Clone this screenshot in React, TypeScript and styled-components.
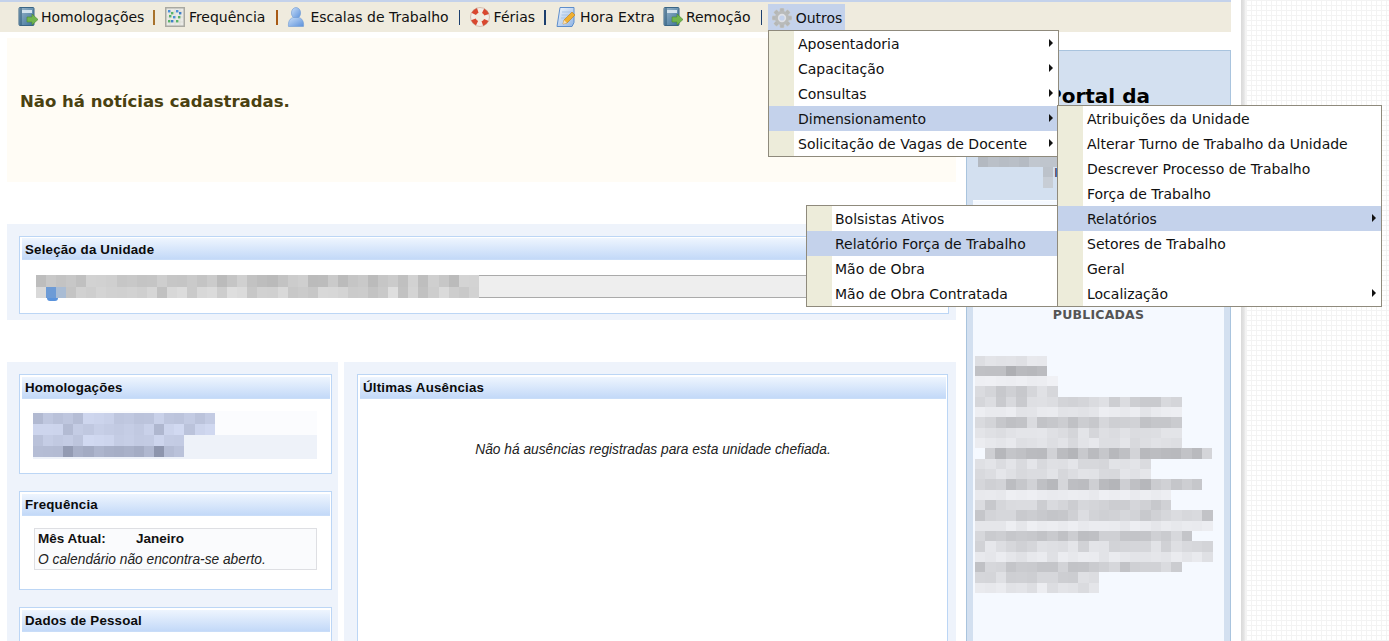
import React from "react";
import styled, { createGlobalStyle } from "styled-components";

const Global = createGlobalStyle`
  html, body { margin: 0; padding: 0; background: #fff; }
  body { font-family: "DejaVu Sans", sans-serif; color: #111; }
`;

const Page = styled.div`
  display: flex;
  width: 1389px;
  height: 641px;
  overflow: hidden;
  position: relative;
`;
const Main = styled.div`
  width: 1231px;
  flex: none;
  display: flex;
  flex-direction: column;
`;
const Edge = styled.div`
  margin-left: 10px;
  width: 5px;
  flex: none;
  background: linear-gradient(90deg, #d9d9d9, #e4e4e4 60%, #f7f7f7);
`;
const Pattern = styled.div`
  flex: 1;
  background-color: #fff;
  background-image:
    repeating-linear-gradient(90deg, #f3f3f3 0 1px, transparent 1px 5px),
    repeating-linear-gradient(0deg, #f3f3f3 0 1px, transparent 1px 5px);
`;
const TopStrip = styled.div`
  height: 2px;
  background: #c4d2eb;
  flex: none;
`;
const MenuBar = styled.nav`
  position: relative;
  height: 30px;
  flex: none;
  background: #efebde;
  display: flex;
  align-items: center;
  padding-left: 18px;
  font-size: 14px;
  color: #111;
`;
const MenuItem = styled.div<{ $gap?: number; $after?: number; $active?: boolean }>`
  display: flex;
  align-items: center;
  gap: ${(p) => p.$gap ?? 3}px;
  margin-right: ${(p) => p.$after ?? 0}px;
  white-space: nowrap;
  ${(p) => p.$active && "background:#c4d2eb; height:28px; margin-top:2px; padding:0 3px 0 4px;"}
`;
const Sep = styled.span<{ $color: string; $left?: number; $right?: number }>`
  width: 1.5px;
  height: 15px;
  background: ${(p) => p.$color};
  margin: 0 ${(p) => p.$right ?? 10}px 0 ${(p) => p.$left ?? 10}px;
  flex: none;
`;
const Icon = styled.svg`
  width: 20px;
  height: 20px;
  flex: none;
  display: block;
`;

const Drop = styled.div<{ $left: number; $top: number; $width: number }>`
  position: absolute;
  left: ${(p) => p.$left}px;
  top: ${(p) => p.$top}px;
  width: ${(p) => p.$width}px;
  background: #fff;
  border: 1px solid #8f8a7c;
  box-sizing: border-box;
  z-index: 5;
  font-size: 14px;
  color: #111;
`;
const DropRow = styled.div<{ $hover?: boolean }>`
  height: 25px;
  display: flex;
  align-items: center;
  position: relative;
  white-space: nowrap;
  background: ${(p) => (p.$hover ? "#c4d2eb" : "transparent")};
`;
const Gutter = styled.span<{ $hover?: boolean; $space: number }>`
  width: 25px;
  height: 25px;
  flex: none;
  margin-right: ${(p) => p.$space}px;
  background: ${(p) => (p.$hover ? "#c4d2eb" : "#edecda")};
`;
const Arrow = styled.span`
  position: absolute;
  right: 5px;
  top: 8px;
  width: 0;
  height: 0;
  border-left: 4px solid #111;
  border-top: 4px solid transparent;
  border-bottom: 4px solid transparent;
`;

const Content = styled.div`
  flex: 1;
  min-height: 0;
  display: flex;
`;
const LeftCol = styled.div`
  width: 949px;
  margin-left: 7px;
  padding-top: 6px;
  flex: none;
  display: flex;
  flex-direction: column;
`;
const News = styled.div`
  height: 144px;
  flex: none;
  background: #fffcf5;
  display: flex;
  align-items: center;
  padding-left: 13px;
  padding-bottom: 18px;
  box-sizing: border-box;
  font-size: 16.55px;
  font-weight: 700;
  color: #4a4110;
`;
const Panel = styled.section`
  background: #eef3fb;
  padding: 12px 7px 6px 12px;
  box-sizing: border-box;
`;
const SelectionPanel = styled(Panel)`
  margin-top: 42px;
  height: 96px;
  flex: none;
`;
const Columns = styled.div`
  margin-top: 42px;
  display: flex;
  gap: 6px;
  flex: 1;
  min-height: 0;
`;
const SidePanel = styled(Panel)`
  width: 331px;
  flex: none;
  display: flex;
  flex-direction: column;
  gap: 17px;
  padding-right: 6px;
`;
const WidePanel = styled(Panel)`
  flex: 1;
  padding: 12px 8px 0 13px;
  display: flex;
`;
const Card = styled.div<{ $h?: number; $top?: number }>`
  background: #fff;
  border: 1px solid #bcd6f5;
  padding: ${(p) => p.$top ?? 2}px 1px 0 2px;
  box-sizing: border-box;
  flex: ${(p) => (p.$h ? "none" : "1")};
  ${(p) => (p.$h ? `height:${p.$h}px;` : "margin-bottom:-10px;")}
`;
const CardTitle = styled.h3<{ $line?: number }>`
  margin: 0;
  height: 22px;
  line-height: ${(p) => p.$line ?? 21}px;
  padding-left: 3px;
  background: linear-gradient(180deg, #eef5fe, #c3d9f8);
  border-bottom: 1px solid #c9ddf8;
  box-sizing: border-box;
  font-family: "Liberation Sans", sans-serif;
  font-size: 13.3px;
  font-weight: 700;
  letter-spacing: 0.2px;
  color: #0b0b0b;
`;
const SelectField = styled.div`
  margin: 15px 8px 0 14px;
  height: 23px;
  background: #eee;
  border-top: 1px solid #aaa;
  border-bottom: 1px solid #aaa;
  box-sizing: border-box;
  position: relative;
`;
const Blob = styled.span`
  position: absolute;
  left: 11px;
  top: 22px;
  width: 11px;
  height: 3px;
  background: #5a93dc;
  border-radius: 0 0 6px 6px;
`;
const MosaicWrap = styled.div<{ $top?: number }>`
  display: flex;
  flex-direction: column;
  margin-top: ${(p) => p.$top ?? 0}px;
`;
const MosaicRow = styled.div<{ $h: number; $x: number }>`
  display: flex;
  height: ${(p) => p.$h}px;
  margin-left: ${(p) => p.$x}px;
`;
const Cell = styled.span<{ $w: number }>`
  width: ${(p) => p.$w}px;
  flex: none;
`;
const StripBox = styled.div`
  margin: 12px 13px 0 11px;
`;
const Strip = styled.div<{ $alt?: boolean }>`
  height: 24px;
  background: ${(p) => (p.$alt ? "#eef2f9" : "#fbfcfe")};
  ${(p) => !p.$alt && "padding-top:2px; box-sizing:border-box;"}
`;
const Calendar = styled.div`
  margin: 12px 13px 0 12px;
  height: 42px;
  box-sizing: border-box;
  border: 1px solid #dedfe3;
  background: #fafbfd;
  font-family: "Liberation Sans", sans-serif;
  font-size: 13.76px;
  padding: 1px 3px 0;
  line-height: 20px;
`;
const CalRow = styled.div`
  display: grid;
  grid-template-columns: 98px auto;
  font-size: 13.5px;
  line-height: 18px;
  height: 20px;
  font-weight: 700;
  color: #111;
`;
const Note = styled.div`
  font-style: italic;
  color: #222;
`;
const Empty = styled.p`
  margin: 43px 0 0;
  text-align: center;
  font-family: "Liberation Sans", sans-serif;
  font-size: 13.76px;
  font-style: italic;
  color: #222;
`;
const RightCol = styled.aside`
  margin: 18px 0 0 10px;
  width: 265px;
  flex: none;
  box-sizing: border-box;
  background: #d3e0f0;
  border: 1px solid #a9c4de;
  border-bottom: none;
  display: flex;
  flex-direction: column;
  position: relative;
`;
const PortalTitle = styled.h2`
  margin: 32px 0 0;
  text-align: center;
  font-size: 20px;
  line-height: 26px;
  font-weight: 700;
  color: #000;
  height: 73px;
`;
const HiddenLine = styled.span<{ $top: number }>`
  position: absolute;
  left: 87px;
  top: ${(p) => p.$top}px;
  font-size: 13px;
  line-height: 12px;
  color: #1a2a5a;
`;
const InnerBox = styled.div`
  margin: 12px 6px 0 6px;
  flex: 1;
  background: #f5f9ff;
  border-top: 1px solid #fbfdff;
  text-align: center;
`;
const Published = styled.h4`
  margin: 106px 0 0;
  font-size: 12.5px;
  line-height: 16px;
  font-weight: 700;
  color: #555;
  letter-spacing: 0.2px;
`;

const hash = (a: number, b: number) => {
  const s = Math.sin(a * 127.1 + b * 311.7) * 43758.5453;
  return s - Math.floor(s);
};
const tone = (base: number, spread: number, tint: [number, number, number], a: number, b: number) => {
  const v = base + (hash(a, b) - 0.5) * spread;
  return `rgb(${Math.round(v + tint[0])},${Math.round(v + tint[1])},${Math.round(v + tint[2])})`;
};

type RowDef = { x: number; n: number; base: number; spread?: number };
const Mosaic: React.FC<{
  rows: RowDef[];
  w: number;
  h: number;
  tint: [number, number, number];
  top?: number;
  over?: Record<string, string>;
}> = ({ rows, w, h, tint, top, over }) => (
  <MosaicWrap $top={top}>
    {rows.map((r, i) => (
      <MosaicRow key={i} $h={h} $x={r.x}>
        {Array.from({ length: r.n }).map((_, j) => (
          <Cell
            key={j}
            $w={w}
            style={{ background: over?.[`${i}:${j}`] ?? tone(r.base, r.spread ?? 26, tint, i + 1, j + 1) }}
          />
        ))}
      </MosaicRow>
    ))}
  </MosaicWrap>
);

const Book: React.FC<{ id: string }> = ({ id }) => (
  <Icon viewBox="0 0 20 20">
    <defs>
      <linearGradient id={id} x1="0" x2="1" y1="0" y2="1">
        <stop offset="0" stopColor="#9db8cb" />
        <stop offset="1" stopColor="#3a7098" />
      </linearGradient>
    </defs>
    <rect x="1" y="0.5" width="15" height="18" rx="1" fill={`url(#${id})`} stroke="#3a6585" />
    <rect x="4" y="3" width="10" height="3" fill="#d3e2ec" />
    <path d="M3 1v17" stroke="#2a5674" strokeWidth="1" />
    <path d="M9 10h5V7l6 5.500-6 5.500v-3H9z" fill="#72b54e" stroke="#4a8a30" strokeWidth="0.6" />
  </Icon>
);
const Dots: React.FC = () => (
  <Icon viewBox="0 0 20 20">
    <rect x="0.75" y="0.75" width="18.5" height="18.5" fill="#eaeae6" stroke="#a9a9a2" strokeWidth="1.500" />
    <path d="M5 2v16M10 2v16M15 2v16M2 5h16M2 10h16M2 15h16" stroke="#d6d6d1" strokeWidth="0.6" />
    {[
      [4, 4, "#4a90d9"], [7, 6, "#58b368"], [12, 4, "#4a90d9"], [15, 6, "#3f7fc8"],
      [5, 9, "#58b368"], [9, 10, "#4a90d9"], [14, 10, "#58b368"], [7, 14, "#3f7fc8"], [12, 14, "#58b368"], [4, 14, "#58b368"],
    ].map(([x, y, c], i) => (
      <rect key={i} x={(x as number) - 1} y={(y as number) - 1} width="2.4" height="2.4" fill={c as string} />
    ))}
  </Icon>
);
const Person: React.FC = () => (
  <Icon viewBox="0 0 20 20">
    <defs>
      <linearGradient id="pg" x1="0" x2="1" y1="0" y2="1">
        <stop offset="0" stopColor="#c8def8" />
        <stop offset="1" stopColor="#5b90da" />
      </linearGradient>
    </defs>
    <ellipse cx="10" cy="6" rx="4.6" ry="5.500" fill="url(#pg)" stroke="#6f9ad4" strokeWidth="0.6" />
    <path d="M2.500 19.500c-.6-5 1.500-8.500 5-9h5c3.500.5 5.600 4 5 9z" fill="url(#pg)" stroke="#6f9ad4" strokeWidth="0.6" />
  </Icon>
);
const Buoy: React.FC = () => (
  <Icon viewBox="0 0 20 20">
    <circle cx="10" cy="10" r="7" fill="none" stroke="#f2ece6" strokeWidth="5" />
    <circle cx="10" cy="10" r="7" fill="none" stroke="#d9472f" strokeWidth="5" strokeDasharray="5.500 5.500" strokeDashoffset="8" />
    <circle cx="10" cy="10" r="9.500" fill="none" stroke="#b9907f" strokeWidth="0.5" />
  </Icon>
);
const NotePad: React.FC = () => (
  <Icon viewBox="0 0 20 20">
    <defs>
      <linearGradient id="ng" x1="0" x2="1" y1="0" y2="1">
        <stop offset="0" stopColor="#f4f8fd" />
        <stop offset="1" stopColor="#8fb4e4" />
      </linearGradient>
    </defs>
    <path d="M4 .5h14v15l-2 4H1z" fill="url(#ng)" stroke="#5e8ecb" />
    <path d="M6 5h9M5.500 8h7M5 11h5" stroke="#a9c4e6" />
    <path d="M7 17l1-4 8-8 3 3-8 8z" fill="#f0b030" stroke="#b97c18" strokeWidth="0.6" />
    <path d="M7 17l1-4 3 3z" fill="#f6e0bc" />
  </Icon>
);
const Gear: React.FC = () => (
  <Icon viewBox="0 0 20 20">
    <g fill="#b5b7b6" stroke="#d2d3d1" strokeWidth="0.5">
      {[0, 45, 90, 135, 180, 225, 270, 315].map((a) => (
        <rect key={a} x="7.800" y="0" width="4.400" height="5" rx="1" transform={`rotate(${a} 10 10)`} />
      ))}
    </g>
    <circle cx="10" cy="10" r="7" fill="#b9bbba" />
    <circle cx="10" cy="10" r="4.200" fill="#dfe1e6" />
    <circle cx="10" cy="10" r="2.600" fill="#c4d2eb" />
  </Icon>
);

const dropA = ["Aposentadoria", "Capacitação", "Consultas", "Dimensionamento", "Solicitação de Vagas de Docente"];
const dropB = [
  "Atribuições da Unidade",
  "Alterar Turno de Trabalho da Unidade",
  "Descrever Processo de Trabalho",
  "Força de Trabalho",
  "Relatórios",
  "Setores de Trabalho",
  "Geral",
  "Localização",
];
const dropC = ["Bolsistas Ativos", "Relatório Força de Trabalho", "Mão de Obra", "Mão de Obra Contratada"];

const DropMenu: React.FC<{
  left: number;
  top: number;
  width: number;
  items: string[];
  hover: string;
  arrows: string[];
  space?: number;
}> = ({ left, top, width, items, hover, arrows, space = 4 }) => (
  <Drop $left={left} $top={top} $width={width}>
    {items.map((t) => (
      <DropRow key={t} $hover={t === hover}>
        <Gutter $hover={t === hover} $space={space} />
        {t}
        {arrows.includes(t) && <Arrow />}
      </DropRow>
    ))}
  </Drop>
);

const selectionRows: RowDef[] = [
  { x: 0, n: 44, base: 200, spread: 28 },
  { x: 0, n: 44, base: 208, spread: 30 },
];
const homologRows: RowDef[] = [
  { x: 0, n: 18, base: 208, spread: 38 },
  { x: 0, n: 18, base: 210, spread: 38 },
  { x: 0, n: 15, base: 214, spread: 30 },
  { x: 0, n: 15, base: 182, spread: 50 },
];
const portalRows: RowDef[] = [
  { x: 2, n: 7, base: 228, spread: 14 },
  { x: 2, n: 7, base: 185, spread: 26 },
  { x: 2, n: 8, base: 238, spread: 8 },
  { x: 2, n: 8, base: 212, spread: 26 },
  { x: 2, n: 20, base: 212, spread: 26 },
  { x: 2, n: 20, base: 232, spread: 12 },
  { x: 2, n: 20, base: 205, spread: 30 },
  { x: 2, n: 20, base: 222, spread: 18 },
  { x: 2, n: 20, base: 226, spread: 22 },
  { x: 12, n: 22, base: 198, spread: 36 },
  { x: 2, n: 17, base: 222, spread: 16 },
  { x: 2, n: 17, base: 222, spread: 16 },
  { x: 2, n: 22, base: 198, spread: 36 },
  { x: 2, n: 19, base: 236, spread: 8 },
  { x: 2, n: 19, base: 212, spread: 24 },
  { x: 2, n: 23, base: 208, spread: 32 },
  { x: 2, n: 23, base: 234, spread: 10 },
  { x: 2, n: 21, base: 202, spread: 30 },
  { x: 2, n: 23, base: 218, spread: 28 },
  { x: 2, n: 23, base: 230, spread: 14 },
  { x: 2, n: 20, base: 205, spread: 30 },
  { x: 2, n: 12, base: 216, spread: 22 },
  { x: 2, n: 12, base: 228, spread: 18 },
];
const portalTop: RowDef[] = [
  { x: 11, n: 8, base: 190, spread: 18 },
  { x: 76, n: 1, base: 190, spread: 6 },
  { x: 76, n: 1, base: 202, spread: 4 },
];

const App: React.FC = () => (
  <Page>
    <Global />
    <Main>
      <TopStrip />
      <MenuBar>
        <MenuItem><Book id="b1" />Homologações</MenuItem>
        <Sep $color="#a8722c" $left={9} />
        <MenuItem $gap={4}><Dots />Frequência</MenuItem>
        <Sep $color="#a85a14" $left={11} $right={8.5} />
        <MenuItem $gap={4}><Person />Escalas de Trabalho</MenuItem>
        <Sep $color="#1c3f6e" $right={9.5} />
        <MenuItem $gap={4}><Buoy />Férias</MenuItem>
        <Sep $color="#1c3f6e" $left={9} $right={10.5} />
        <MenuItem $gap={4} $after={8}><NotePad />Hora Extra</MenuItem>
        <MenuItem><Book id="b2" />Remoção</MenuItem>
        <Sep $color="#1c3f6e" $right={5.5} />
        <MenuItem $active $gap={4}><Gear />Outros</MenuItem>
        <DropMenu left={768} top={28} width={291} items={dropA} hover="Dimensionamento" arrows={dropA} />
        <DropMenu left={1057} top={103} width={325} items={dropB} hover="Relatórios" arrows={["Relatórios", "Localização"]} />
        <DropMenu left={806} top={203} width={252} items={dropC} hover="Relatório Força de Trabalho" arrows={[]} space={3} />
      </MenuBar>
      <Content>
        <LeftCol>
          <News>Não há notícias cadastradas.</News>
          <SelectionPanel>
            <Card $h={78} $top={1}>
              <CardTitle $line={23}>Seleção da Unidade</CardTitle>
              <SelectField>
                <Mosaic rows={selectionRows} w={10.07} h={11.5} top={-1} tint={[0, 0, 0]} over={{ "1:1": "#6d9bd6", "1:2": "#a9bcd4" }} />
                <Blob />
              </SelectField>
            </Card>
          </SelectionPanel>
          <Columns>
            <SidePanel>
              <Card $h={100}>
                <CardTitle>Homologações</CardTitle>
                <StripBox>
                  <Strip>
                    <Mosaic rows={homologRows.slice(0, 2)} w={10.1} h={11} tint={[-16, -8, 16]} />
                  </Strip>
                  <Strip $alt>
                    <Mosaic rows={homologRows.slice(2)} w={10.1} h={11} tint={[-16, -8, 16]} />
                  </Strip>
                </StripBox>
              </Card>
              <Card $h={99}>
                <CardTitle>Frequência</CardTitle>
                <Calendar>
                  <CalRow><span>Mês Atual:</span><span>Janeiro</span></CalRow>
                  <Note>O calendário não encontra-se aberto.</Note>
                </Calendar>
              </Card>
              <Card $h={80}>
                <CardTitle>Dados de Pessoal</CardTitle>
              </Card>
            </SidePanel>
            <WidePanel>
              <Card>
                <CardTitle>Últimas Ausências</CardTitle>
                <Empty>Não há ausências registradas para esta unidade chefiada.</Empty>
              </Card>
            </WidePanel>
          </Columns>
        </LeftCol>
        <RightCol>
          <PortalTitle>Portal da</PortalTitle>
          <HiddenLine $top={116}>I</HiddenLine>
          <Mosaic rows={portalTop} w={10.3} h={10.5} tint={[-4, 2, 10]} />
          <InnerBox>
            <Published>PUBLICADAS</Published>
            <Mosaic rows={portalRows} w={10.33} h={10.33} tint={[-1, 0, 4]} top={33} />
          </InnerBox>
        </RightCol>
      </Content>
    </Main>
    <Edge />
    <Pattern />
  </Page>
);

export default App;
